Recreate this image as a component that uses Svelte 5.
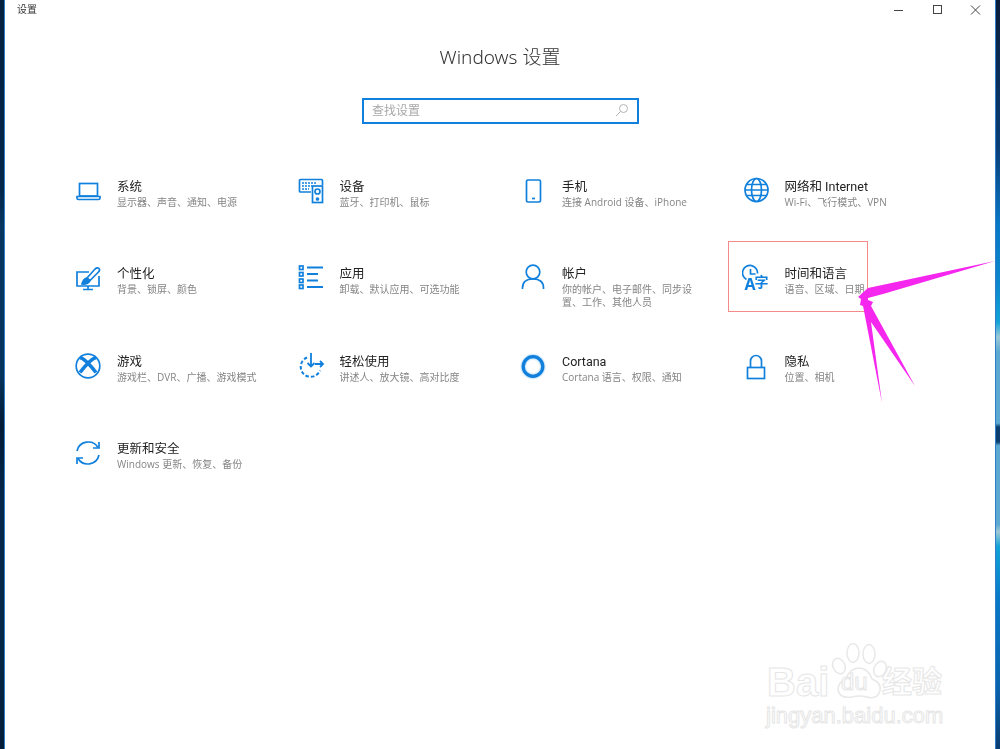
<script lang="ts">
  const icons: Record<string, string> = {
    laptop: `<rect x="5.5" y="6.5" width="18" height="12.5"/><path d="M3 19.5h23v1.5q0 1.500-1.500 1.500h-20q-1.500 0-1.500-1.500z"/>`,
    device: `<path d="M14 15H3.5q-1 0-1-1V3.5q0-1 1-1h21q1 0 1 1V8"/><path d="M5 6h14M5 9h10M5 12h7" stroke-dasharray="2 1"/><rect x="15.5" y="9" width="10" height="16.5" fill="#fff"/><circle cx="20.5" cy="14.5" r="2.5"/><circle cx="20.5" cy="22" r="1"/>`,
    phone: `<rect x="7.5" y="3" width="14" height="22" rx="1.5"/><path d="M13 21.5h3"/>`,
    globe: `<circle cx="14.5" cy="13" r="11.5"/><ellipse cx="14.5" cy="13" rx="5" ry="11.5"/><path d="M3 13h23M4.5 7.5h20M4.5 18.5h20"/>`,
    brush: `<path d="M15 8H3v14h22V12"/><path d="M14 22v3M9 25.5h10"/><path d="M13 14l8-9q2.5-2 4-.5t-1 4l-8 8"/><path d="M8 20q1-5 5-6l3 2.5q-2 4-8 3.5z" fill="#1180dc"/>`,
    list: `<path d="M10 3.5h16M10 10h11M10 16.5h11M10 23h16" stroke-width="1.8"/><rect x="2.5" y="2" width="3.5" height="3.5"/><rect x="2.5" y="8.5" width="3.5" height="3.5"/><rect x="2.5" y="15" width="3.5" height="3.5"/><rect x="2.5" y="21" width="3.5" height="3.5"/>`,
    user: `<circle cx="14" cy="8" r="6.8"/><path d="M3.5 25v-1q0-9 10.500-9t10.500 9v1"/>`,
    xbox: `<circle cx="14" cy="14" r="11.8"/><path d="M6 5.5q5 1 16 15M22 5.5q-5 1-16 15" stroke-width="3.6"/>`,
    ease: `<path d="M10 5.500a10 10 0 1 0 13 13" stroke-dasharray="3.5 2" stroke-width="2"/><path d="M14 1v13M10.500 11l3.500 3.500l3.500-3.500M18 12h8M23 9l3 3l-3 3" stroke-width="1.8"/>`,
    ring: `<circle cx="14" cy="14.5" r="9.8" stroke-width="3.2"/>`,
    lock: `<rect x="5.5" y="15.5" width="17" height="11"/><path d="M8.500 15.500V9a5.500 5.500 0 0 1 11 0v6.500"/>`,
    sync: `<path d="M3 12a11.500 11.500 0 0 1 21-3.500M25 16a11.500 11.500 0 0 1-21 3.500"/><path d="M25 3v6h-6M3 25v-6h6"/>`
  };

  const items = [
    { icon: 'laptop', title: '系统', desc: '显示器、声音、通知、电源' },
    { icon: 'device', title: '设备', desc: '蓝牙、打印机、鼠标' },
    { icon: 'phone', title: '手机', desc: '连接 Android 设备、iPhone' },
    { icon: 'globe', title: '网络和 Internet', desc: 'Wi-Fi、飞行模式、VPN' },
    { icon: 'brush', title: '个性化', desc: '背景、锁屏、颜色' },
    { icon: 'list', title: '应用', desc: '卸载、默认应用、可选功能' },
    { icon: 'user', title: '帐户', desc: '你的帐户、电子邮件、同步设\n置、工作、其他人员' },
    { icon: 'clock', title: '时间和语言', desc: '语音、区域、日期' },
    { icon: 'xbox', title: '游戏', desc: '游戏栏、DVR、广播、游戏模式' },
    { icon: 'ease', title: '轻松使用', desc: '讲述人、放大镜、高对比度' },
    { icon: 'ring', title: 'Cortana', desc: 'Cortana 语言、权限、通知' },
    { icon: 'lock', title: '隐私', desc: '位置、相机' },
    { icon: 'sync', title: '更新和安全', desc: 'Windows 更新、恢复、备份' }
  ];
</script>

<div class="screen">
  <div class="wall-left"></div>

  <main class="window">
    <header class="titlebar">
      <span class="app-name">设置</span>
      <div class="controls">
        <svg width="38" height="20" viewBox="0 0 38 20"><path d="M13 10.5h9" /></svg>
        <svg width="38" height="20" viewBox="0 0 38 20"><rect x="14.5" y="5.5" width="8" height="8" /></svg>
        <svg width="38" height="20" viewBox="0 0 38 20"><path d="M14 5.5l9 9M23 5.5l-9 9" /></svg>
      </div>
    </header>

    <h1>Windows 设置</h1>

    <div class="search">
      <span class="placeholder">查找设置</span>
      <svg width="14" height="14" viewBox="0 0 14 14" class="search-icon">
        <circle cx="8.5" cy="5.5" r="4" />
        <path d="M5.5 8.5L1 13" />
      </svg>
    </div>

    <section class="grid">
      {#each items as item}
        <div class="item">
          <div class="icon" class:glow={item.icon === 'ring'}>
            {#if item.icon === 'clock'}
              <svg width="30" height="30" viewBox="0 0 30 30" fill="none" stroke="#1180dc" stroke-width="1.7">
                <path d="M4.500 15.500a7.500 7.500 0 1 1 11-6M8.500 5v5h5" />
              </svg>
              <span class="glyph-a">A</span>
              <span class="glyph-zi">字</span>
            {:else}
              <svg width="30" height="30" viewBox="0 0 30 30" fill="none" stroke="#1180dc" stroke-width="1.7">
                {@html icons[item.icon]}
              </svg>
            {/if}
          </div>
          <div class="text">
            <div class="title">{item.title}</div>
            <div class="desc">{item.desc}</div>
          </div>
        </div>
      {/each}
    </section>
  </main>

  <div class="wall-right"></div>

  <!-- screenshot annotations -->
  <div class="red-box"></div>
  <svg class="arrow" width="1000" height="749" viewBox="0 0 1000 749">
    <polygon
      fill="#f526ee"
      points="995,261 868,288 858,297 861,299 860,305 863,306 864,311 882,403 871,322 915,386 871,306 873,302 868,300 868,298 883,294"
    />
  </svg>

  <div class="watermark">
    <div class="brand">
      <span class="bai">Bai</span>
      <svg class="paw" width="60" height="62" viewBox="0 0 60 62" fill="#fff" stroke="#e8e8e8" stroke-width="1.5">
        <ellipse cx="10" cy="26" rx="6" ry="8" transform="rotate(-25 10 26)" />
        <ellipse cx="24" cy="13" rx="6" ry="9.5" />
        <ellipse cx="40" cy="14" rx="6" ry="9.5" />
        <ellipse cx="51" cy="29" rx="6" ry="8" transform="rotate(25 51 29)" />
        <path d="M30 28q9 0 13 11q10 4 8 12q-3 9-13 6q-8-2-15 0q-12 2-14-7q0-8 8-11q4-11 13-11z" />
      </svg>
      <span class="du">du</span>
      <span class="jy">经验</span>
    </div>
    <div class="url">jingyan.baidu.com</div>
  </div>
</div>

<style>
  :global(body) {
    margin: 0;
    background: #fff;
  }

  .screen {
    position: relative;
    display: flex;
    width: 1000px;
    height: 749px;
    overflow: hidden;
    font-family: 'Noto Sans', 'Noto Sans CJK SC', sans-serif;
  }

  .wall-left {
    width: 4px;
    background: linear-gradient(180deg, #04203f 0%, #03264a 25%, #07355f 30%, #06335c 50%, #021a35 57%, #04264a 66%, #042747 85%, #031d38 100%);
  }

  .wall-right {
    width: 4px;
    background: linear-gradient(180deg, #0a1c3a 0%, #0a3e78 20%, #0878c8 30%, #0c86cc 38%, #12a2d8 43%, #9cc8d8 45%, #5ca8d0 47%, #5ca8d0 56.5%, #0c3f70 57%, #0c3f70 59%, #5ca8d0 59.5%, #5ca8d0 70%, #a0c8d4 71%, #12a2d8 73%, #0878c8 80%, #0a62ac 92%, #0a3c70 100%);
  }

  .window {
    flex: 1;
    display: flex;
    flex-direction: column;
    background: #fff;
    border-left: 1px solid #2f7fc8;
    border-right: 1px solid #2f7fc8;
    filter: blur(0.45px);
  }

  .titlebar {
    display: flex;
    justify-content: space-between;
    height: 20px;
    padding-left: 12px;
  }

  .app-name {
    font-size: 10px;
    line-height: 19px;
    color: #333;
  }

  .controls {
    display: flex;
  }

  .controls svg {
    fill: none;
    stroke: #444;
    stroke-width: 1;
  }

  h1 {
    margin: 22px 0 0;
    height: 30px;
    font-size: 19px;
    font-weight: 300;
    line-height: 30px;
    text-align: center;
    color: #333;
  }

  .search {
    display: flex;
    align-items: center;
    justify-content: space-between;
    box-sizing: border-box;
    width: 277px;
    height: 26px;
    margin: 26px 0 0 357px;
    padding: 0 8px 2px 8px;
    border: 2px solid #1180dc;
  }

  .placeholder {
    font-size: 12px;
    color: #a8a8a8;
  }

  .search-icon {
    fill: none;
    stroke: #b4b4b4;
    stroke-width: 1;
  }

  .grid {
    display: grid;
    grid-template-columns: repeat(4, 222.5px);
    grid-auto-rows: 87.3px;
    margin: 53px 0 0 69px;
  }

  .item {
    display: flex;
    gap: 13px;
  }

  .icon {
    position: relative;
    width: 30px;
    height: 30px;
  }

  .icon.glow {
    filter: drop-shadow(0 0 1px #6ab8f0);
  }

  .glyph-a,
  .glyph-zi {
    position: absolute;
    color: #1180dc;
    font-weight: 700;
  }

  .glyph-a {
    left: 3px;
    top: 12px;
    font-size: 16px;
    line-height: 16px;
  }

  .glyph-zi {
    left: 13px;
    top: 10px;
    font-size: 14px;
    line-height: 16px;
  }

  .text {
    width: 150px;
  }

  .title {
    font-family: Roboto, 'Noto Sans CJK SC', sans-serif;
    font-size: 12.5px;
    line-height: 18px;
    padding-top: 1px;
    color: #222;
  }

  .desc {
    font-family: 'Open Sans', 'Noto Sans CJK SC', sans-serif;
    font-size: 10px;
    line-height: 13px;
    color: #858585;
    white-space: pre-line;
  }

  .red-box {
    position: absolute;
    left: 728px;
    top: 241px;
    width: 138px;
    height: 69px;
    border: 1px solid #f58a8a;
  }

  .arrow {
    position: absolute;
    left: 0;
    top: 0;
  }

  .watermark {
    position: absolute;
    left: 766px;
    top: 640px;
    width: 190px;
  }

  .brand {
    position: relative;
    height: 62px;
  }

  .bai,
  .du,
  .jy,
  .url {
    color: #fff;
    -webkit-text-stroke: 1px #e6e6e6;
    font-family: 'Liberation Sans', 'Noto Sans CJK SC', sans-serif;
  }

  .bai {
    position: absolute;
    left: 1px;
    top: 19px;
    font-size: 40px;
    line-height: 46px;
    font-weight: 700;
  }

  .paw {
    position: absolute;
    left: 63px;
    top: 0;
  }

  .du {
    position: absolute;
    left: 75px;
    top: 29px;
    font-size: 24px;
    line-height: 26px;
  }

  .jy {
    position: absolute;
    left: 116px;
    top: 24px;
    font-size: 30px;
    line-height: 36px;
    font-weight: 700;
  }

  .url {
    margin-top: 1px;
    font-size: 22px;
    line-height: 26px;
    white-space: nowrap;
  }
</style>
